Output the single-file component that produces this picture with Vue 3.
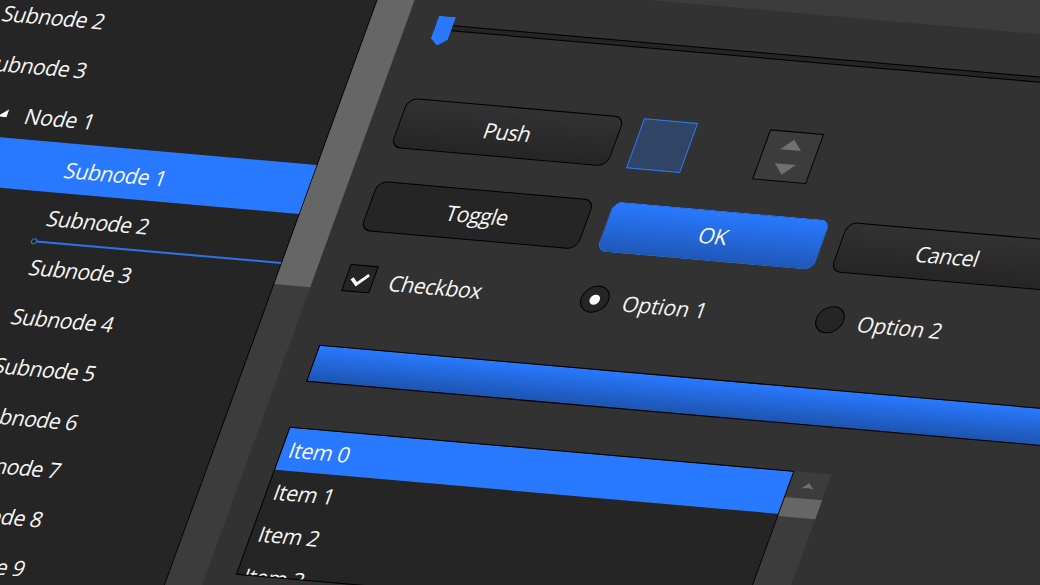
<template>
  <div class="viewport">
    <div class="window">
      <div class="tree">
        <div
          v-for="(node, index) in nodes"
          :key="index"
          class="tree-row"
          :class="['level-' + node.level, { selected: node.selected }]"
        >
          <svg v-if="node.expanded" class="expander" viewBox="0 0 10 10">
            <path d="M9.5 1.2V9H0.5Z" fill="#fff" />
          </svg>
          <span>{{ node.label }}</span>
          <div v-if="node.dropAfter" class="drop-line"></div>
        </div>
      </div>

      <div class="scrollbar">
        <div class="thumb"></div>
      </div>

      <div class="panel">
        <div class="slider">
          <div class="track"></div>
          <svg class="handle" viewBox="0 0 17 29">
            <path d="M0 0H17V22.5L8.5 29L0 22.5Z" fill="#2979ff" />
          </svg>
        </div>

        <div class="row">
          <button>Push</button>
          <div class="color-box"></div>
          <div class="spinner">
            <svg viewBox="0 0 54 50">
              <path d="M27 8L37.5 18.5H16.5Z M16.5 32.5H37.5L27 43Z" fill="#707070" />
            </svg>
          </div>
        </div>

        <div class="row">
          <button class="toggled">Toggle</button>
          <button class="primary">OK</button>
          <button class="cancel">Cancel</button>
        </div>

        <div class="row options">
          <label class="option">
            <span class="checkbox">
              <svg viewBox="0 0 28 27">
                <path d="M6.3 14L12.5 19.3L21.7 9.3" fill="none" stroke="#fff" stroke-width="3.2" />
              </svg>
            </span>
            <span class="caption">Checkbox</span>
          </label>
          <label class="option radio-option">
            <span class="radio"><i></i></span>
            <span class="caption">Option 1</span>
          </label>
          <label class="option radio-option">
            <span class="radio"></span>
            <span class="caption">Option 2</span>
          </label>
        </div>

        <div class="progress"></div>

        <div class="list-area">
          <div class="list">
            <div v-for="n in 4" :key="n" class="item" :class="{ selected: n === 1 }">Item {{ n - 1 }}</div>
          </div>
          <div class="list-scroll">
            <svg viewBox="0 0 37 26">
              <path d="M18.5 10.5L24.5 16.5Q18.5 14.5 12.5 16.5Z" fill="#707070" />
            </svg>
            <div class="list-thumb"></div>
          </div>
        </div>
      </div>
    </div>
  </div>
</template>

<script setup>
import { ref } from 'vue';

const nodes = ref([
  { label: 'Subnode 2', level: 1 },
  { label: 'Subnode 3', level: 1 },
  { label: 'Node 1', level: 2, expanded: true },
  { label: 'Subnode 1', level: 3, selected: true },
  { label: 'Subnode 2', level: 3, dropAfter: true },
  { label: 'Subnode 3', level: 3 },
  { label: 'Subnode 4', level: 3 },
  { label: 'Subnode 5', level: 3 },
  { label: 'Subnode 6', level: 3 },
  { label: 'Subnode 7', level: 3 },
  { label: 'Subnode 8', level: 3 },
  { label: 'Subnode 9', level: 3 },
]);
</script>

<style>
body {
  margin: 0;
  overflow: hidden;
}
</style>

<style scoped>
.viewport {
  width: 1040px;
  height: 585px;
  overflow: hidden;
  background: #3c3c3c;
}

/* the whole window is sheared, everything inside is laid out straight */
.window {
  display: grid;
  grid-template-columns: 366px 36px 858px;
  width: 1260px;
  height: 640px;
  transform-origin: 0 0;
  transform: matrix(1, 0.0875, -0.3635, 1, 20, -55);
  font-family: "Open Sans", "Noto Sans", sans-serif;
  font-size: 21px;
  letter-spacing: -0.4px;
  color: #f7f7f7;
}

.tree {
  box-sizing: border-box;
  padding-top: 41.4px;
  background: #252525;
  border-right: 1px solid #000;
}

.tree-row {
  position: relative;
  display: flex;
  align-items: center;
  height: 48.8px;
  box-sizing: border-box;
  padding-top: 3px;
  white-space: nowrap;
}

.level-1 {
  padding-left: 7.5px;
}

.level-2 {
  padding-left: 37.5px;
  letter-spacing: -0.2px;
}

.level-3 {
  padding-left: 123px;
}

.expander {
  width: 10px;
  height: 10px;
  margin-right: 18px;
  margin-bottom: 2px;
}

.selected {
  background: #2979ff;
}

.drop-line {
  position: absolute;
  left: 120px;
  right: 0;
  bottom: -1.5px;
  height: 2px;
  background: #2b73e6;
}

.drop-line::before {
  content: "";
  position: absolute;
  left: -5px;
  top: -2px;
  width: 4px;
  height: 4px;
  border: 1px solid #2b73e6;
  border-radius: 50%;
  background: #252525;
}

.scrollbar {
  background: #3c3c3c;
}

.thumb {
  height: 307px;
  background: #666;
}

.panel {
  box-sizing: border-box;
  padding: 33px 0 0 29px;
  background: #323232;
}

.slider {
  position: relative;
  height: 29px;
  padding-top: 8px;
  margin-bottom: 53px;
  box-sizing: border-box;
}

.track {
  height: 4px;
  background: #252525;
  border: 1px solid #000;
}

.handle {
  position: absolute;
  left: 0;
  top: 0;
  width: 17px;
  height: 29px;
}

.row {
  display: flex;
  gap: 18px;
  height: 50px;
  margin-bottom: 33px;
}

button {
  width: 217px;
  height: 50px;
  padding: 0;
  border: 1px solid #000;
  border-radius: 10px;
  background: linear-gradient(#323232, #252525);
  color: inherit;
  font: inherit;
  letter-spacing: inherit;
}

button:first-child {
  margin: 0 1px 0 -1px;
}

.toggled {
  background: #252525;
}

.primary {
  border-color: #2979ff #2769d6 #2769d6;
  background: linear-gradient(#2979ff, #1f58b8);
}

.cancel {
  margin-left: -1px;
}

.color-box {
  box-sizing: border-box;
  width: 54px;
  height: 50px;
  border: 1px solid #2979ff;
  background: #304466;
}

.spinner {
  box-sizing: border-box;
  width: 54px;
  height: 50px;
  margin-left: 54px;
  border: 1px solid #000;
  background: #3c3c3c;
}

.spinner svg {
  display: block;
  width: 54px;
  height: 50px;
  margin: -1px;
}

.options {
  height: 27px;
  margin-bottom: 54px;
}

.option {
  box-sizing: border-box;
  display: flex;
  align-items: center;
  gap: 16px;
  width: 217px;
  padding-left: 2px;
}

.caption {
  padding-top: 2px;
  white-space: nowrap;
}

.radio-option {
  gap: 15px;
  padding-left: 1.5px;
}

.radio-option .caption {
  letter-spacing: -0.1px;
}

.checkbox {
  box-sizing: border-box;
  width: 28px;
  height: 27px;
  border: 1px solid #000;
  background: #252525;
}

.checkbox svg {
  display: block;
  width: 28px;
  height: 27px;
  margin: -1px;
}

.radio {
  display: flex;
  align-items: center;
  justify-content: center;
  box-sizing: border-box;
  width: 28px;
  height: 27px;
  border: 1px solid #000;
  border-radius: 50%;
  background: #252525;
}

.radio i {
  width: 10px;
  height: 10px;
  border-radius: 50%;
  background: #fff;
}

.progress {
  height: 34.5px;
  border: 1px solid #000;
  background: linear-gradient(#2979ff, #1d54b0);
  margin-bottom: 45px;
}

.list-area {
  display: flex;
  height: 148px;
}

.list {
  box-sizing: border-box;
  width: 505px;
  overflow: hidden;
  border: 1px solid #000;
  background: #252525;
}

.item {
  box-sizing: border-box;
  height: 42.2px;
  line-height: 42.2px;
  padding-left: 7px;
  letter-spacing: -0.3px;
}

.list-scroll {
  width: 37px;
  background: #3c3c3c;
}

.list-scroll svg {
  display: block;
  width: 37px;
  height: 26px;
}

.list-thumb {
  height: 19px;
  background: #666;
}
</style>
